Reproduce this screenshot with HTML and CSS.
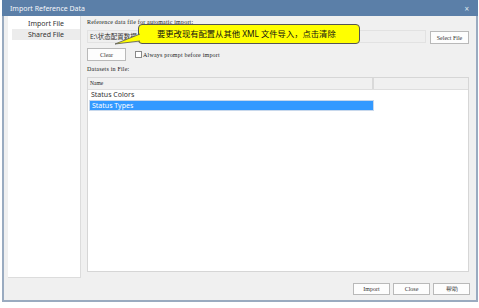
FILE: index.html
```html
<!DOCTYPE html>
<html lang="en">
<head>
  <meta charset="UTF-8" />
  <title>Import Reference Data</title>
  <link rel="stylesheet" href="styles.css">
</head>
<body>
  <div class="window">
    <div class="titlebar">
      <span class="title">Import Reference Data</span>
      <span class="close">&#215;</span>
    </div>

    <div class="main">
      <div class="nav">
        <div class="nav-item">Import File</div>
        <div class="nav-item active">Shared File</div>
      </div>

      <div class="panel">
        <div class="label">Reference data file for automatic import:</div>
        <div class="file-row">
          <div class="file-field">E:\状态配置数据</div>
          <button class="btn btn-select">Select File</button>
        </div>
        <div class="clear-row">
          <button class="btn btn-clear">Clear</button>
          <label class="check"><span class="box"></span>Always prompt before import</label>
        </div>
        <div class="label label-datasets">Datasets in File:</div>

        <div class="grid">
          <div class="grid-head">
            <div class="col-name">Name</div>
            <div class="col-rest"></div>
          </div>
          <div class="grid-row">Status Colors</div>
          <div class="grid-row selected">Status Types</div>
        </div>
      </div>
    </div>

    <div class="footer">
      <button class="btn btn-foot">Import</button>
      <button class="btn btn-foot">Close</button>
      <button class="btn btn-foot">帮助</button>
    </div>

    <div class="callout">
      <svg class="callout-tail" width="26" height="16" viewBox="0 0 26 16">
        <path d="M26 4 L1 14 L26 11" fill="#ffff00" stroke="#555" stroke-width="0.8" />
      </svg>
      要更改现有配置从其他 XML 文件导入，点击清除
    </div>
  </div>
</body>
</html>
```

FILE: styles.css
```css
body {
  margin: 0;
  background: #fff;
  font-family: 'Noto Sans', 'Noto Sans CJK SC', sans-serif;
  color: #222;
}

.window {
  position: relative;
  box-sizing: border-box;
  width: 476px;
  height: 302px;
  margin-left: 2px;
  background: #f0f0f0;
  border-left: 2px solid #9aabc0;
  border-right: 2px solid #9aabc0;
  border-bottom: 2px solid #9aabc0;
}

.titlebar {
  display: flex;
  justify-content: space-between;
  align-items: center;
  height: 16px;
  margin: 0 -2px;
  padding: 0 9px 0 8px;
  background: #5b7fa8;
  color: #f4f6fa;
  font-size: 7px;
}

.close {
  font-size: 8px;
  color: #dfe6ef;
}

.main {
  display: flex;
  height: 262px;
  padding-left: 4px;
}

.nav {
  width: 72px;
  padding-top: 2px;
  background: #fff;
  border-right: 1px solid #dcdcdc;
  border-bottom: 1px solid #dcdcdc;
  font-size: 7px;
  color: #333;
}

.nav-item {
  height: 11px;
  line-height: 11px;
  text-align: center;
  margin-left: 4px;
}

.nav-item.active {
  background: #ececec;
}

.panel {
  flex: 1;
  display: flex;
  flex-direction: column;
  padding: 2px 7px 6px 6px;
}

.label {
  font-family: 'Liberation Serif', serif;
  font-size: 6px;
  height: 9px;
  line-height: 9px;
  letter-spacing: 0.2px;
}

.file-row {
  display: flex;
  align-items: center;
  gap: 4px;
  margin-top: 1px;
}

.file-field {
  flex: 1;
  height: 11px;
  line-height: 11px;
  padding-left: 2px;
  border: 1px solid #e2e2e2;
  background: #efefef;
  font-size: 6.5px;
  color: #333;
}

.btn {
  font-family: 'Liberation Serif', serif;
  font-size: 6px;
  background: #fdfdfd;
  border: 1px solid #b9b9b9;
  color: #333;
  padding: 0;
  margin: 0;
}

.btn-select {
  width: 39px;
  height: 13px;
  margin-top: 3px;
}

.clear-row {
  display: flex;
  align-items: center;
  gap: 9px;
  margin-top: 4px;
}

.btn-clear {
  width: 39px;
  height: 13px;
}

.check {
  display: flex;
  align-items: center;
  gap: 1px;
  font-family: 'Liberation Serif', serif;
  font-size: 6px;
  letter-spacing: 0.2px;
}

.box {
  width: 5px;
  height: 5px;
  border: 1px solid #888;
  background: #fff;
}

.label-datasets {
  margin-top: 4px;
}

.grid {
  flex: 1;
  margin-top: 3px;
  background: #fff;
  border: 1px solid #d6d6d6;
}

.grid-head {
  display: flex;
  height: 11px;
  background: #f0f0f0;
  border-bottom: 1px solid #dedede;
  font-family: 'Liberation Serif', serif;
  font-size: 5.5px;
  line-height: 11px;
}

.col-name {
  width: 282px;
  padding-left: 2px;
  border-right: 2px solid #d9d9d9;
}

.grid-row {
  width: 281px;
  height: 10px;
  line-height: 10px;
  margin-left: 1px;
  padding-left: 2px;
  font-size: 7px;
  color: #333;
}

.grid-row.selected {
  background: #3399ff;
  color: #fff;
  border: 1px solid #c8d8ec;
  height: 9px;
  line-height: 9px;
}

.footer {
  display: flex;
  justify-content: flex-end;
  gap: 3px;
  padding: 5px 6px 0 0;
}

.btn-foot {
  width: 37px;
  height: 12px;
}

.callout {
  position: absolute;
  left: 134px;
  top: 24px;
  width: 202px;
  height: 18px;
  line-height: 18px;
  padding-left: 18px;
  background: #ffff00;
  border: 1px solid #555;
  border-radius: 4px;
  font-size: 8.3px;
  color: #111;
}

.callout-tail {
  position: absolute;
  left: -25px;
  top: 5px;
}
```
